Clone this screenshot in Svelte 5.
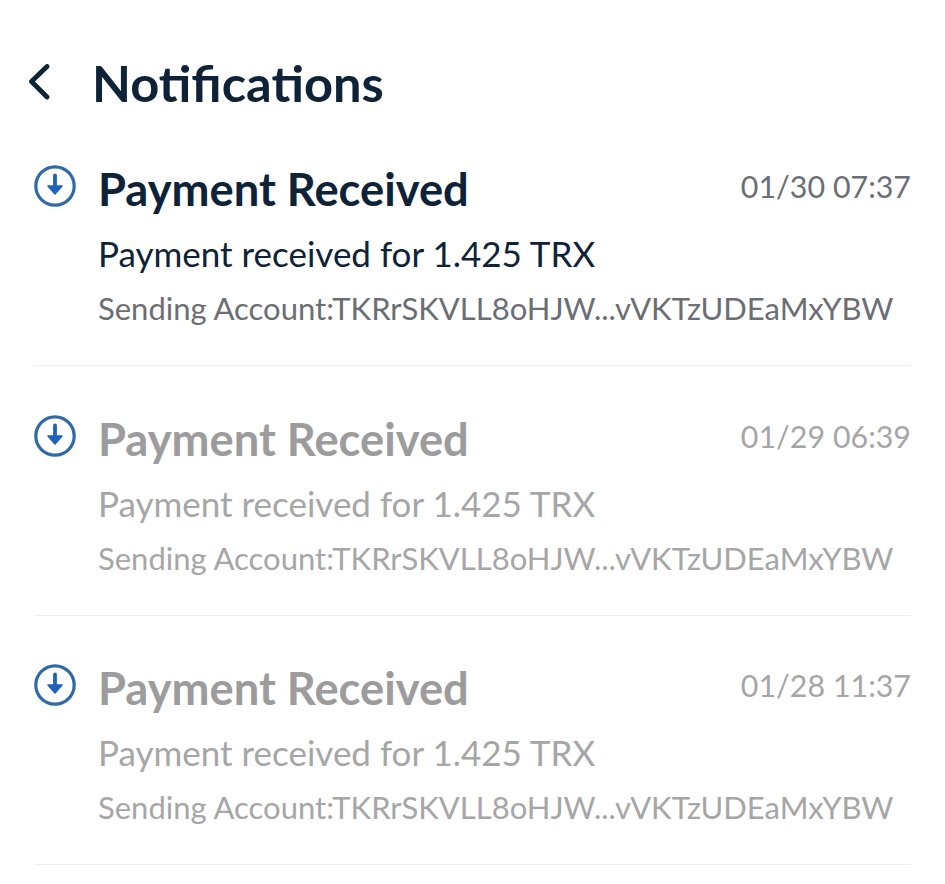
<script>
  const items = [
    { time: '01/30 07:37', unread: true },
    { time: '01/29 06:39', unread: false },
    { time: '01/28 11:37', unread: false }
  ];
</script>

<div class="page">
  <header class="header">
    <svg class="back" viewBox="0 0 26 38" width="26" height="38" aria-hidden="true">
      <path d="M21 2.5 L5.5 17.5 L21 33" fill="none" stroke="#0e2238" stroke-width="4.8" stroke-linecap="round" stroke-linejoin="round" />
    </svg>
    <h1>Notifications</h1>
  </header>

  <div class="list">
    {#each items as item}
      <div class="item" class:read={!item.unread}>
        <svg class="icon" viewBox="0 0 42 42" width="42" height="42" aria-hidden="true">
          <circle cx="21" cy="21" r="19.2" fill="none" stroke="#2f6aa8" stroke-width="3.2" />
          <path d="M21 10.5 V24" stroke="#1f62bd" stroke-width="3.8" stroke-linecap="round" fill="none" />
          <path d="M14 21 H28 L21 29 Z" fill="#1f62bd" stroke="#1f62bd" stroke-width="1.5" stroke-linejoin="round" />
        </svg>
        <div class="body">
          <div class="top">
            <span class="title">Payment Received</span>
            <span class="time">{item.time}</span>
          </div>
          <div class="desc">Payment received for 1.425 TRX</div>
          <div class="account">Sending Account:TKRrSKVLL8oHJW...vVKTzUDEaMxYBW</div>
        </div>
      </div>
    {/each}
  </div>
</div>

<style>
  :global(body) {
    margin: 0;
    background: #fff;
  }

  .page {
    width: 945px;
    height: 884px;
    box-sizing: border-box;
    padding: 53px 34px 0 0;
    font-family: Lato, "Noto Sans", sans-serif;
    overflow: hidden;
  }

  .header {
    display: flex;
    align-items: center;
    height: 60px;
    padding-left: 26px;
    gap: 41px;
  }

  .back {
    flex: none;
  }

  h1 {
    margin: 0 0 0 -1px;
    font-size: 50.6px;
    font-weight: 700;
    line-height: 60px;
    color: #0e2238;
  }

  .list {
    margin-top: 33px;
    margin-left: 34px;
  }

  .item {
    display: flex;
    height: 219px;
    margin-bottom: 29.5px;
    border-bottom: 1px solid #eeeeee;
    box-sizing: content-box;
  }

  .icon {
    flex: none;
    margin-top: 19px;
    margin-right: 22px;
  }

  .body {
    flex: 1;
    min-width: 0;
  }

  .top {
    display: flex;
    justify-content: space-between;
    align-items: flex-start;
    height: 80px;
  }

  .title {
    font-size: 45.3px;
    font-weight: 700;
    line-height: 60px;
    margin-top: 13px;
    color: #0e2238;
  }

  .time {
    font-size: 30.4px;
    font-weight: 400;
    line-height: 40px;
    color: #6b6e72;
    margin-top: 20px;
  }

  .desc {
    margin-top: 5px;
    font-size: 35px;
    line-height: 44px;
    color: #0e2238;
  }

  .account {
    margin-top: 13px;
    font-size: 31px;
    line-height: 40px;
    color: #6b6e72;
    white-space: nowrap;
  }

  .read .title {
    color: #9c9c9c;
  }

  .read .time,
  .read .desc,
  .read .account {
    color: #a6a6a6;
  }
</style>
